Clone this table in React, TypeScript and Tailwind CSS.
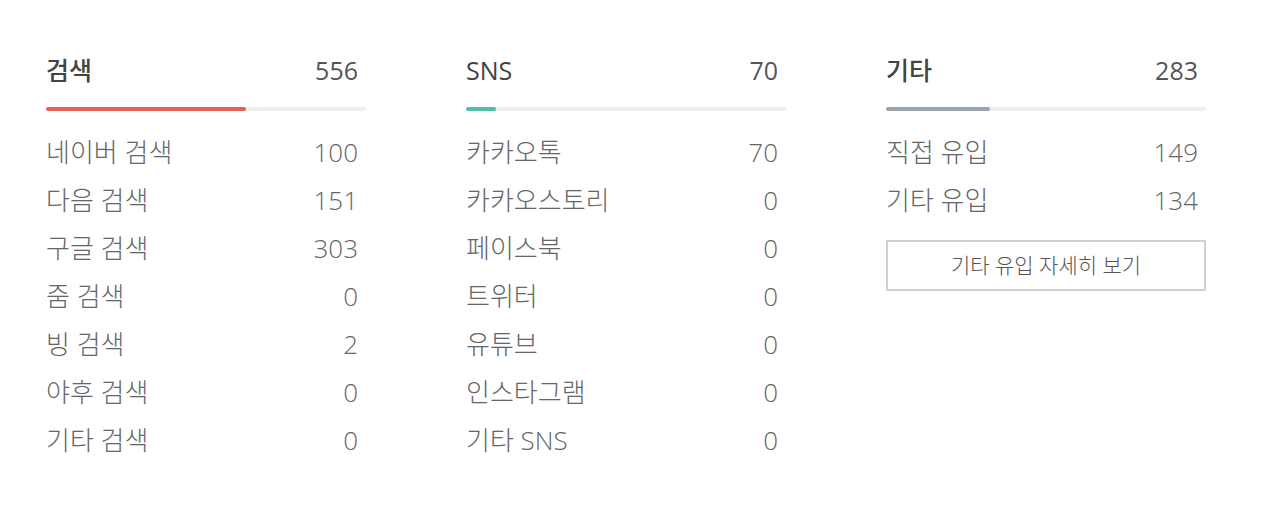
import React from 'react';

type Row = { label: string; value: number };

interface GroupProps {
  title: string;
  total: number;
  barColor: string;
  barWidth: string;
  rows: Row[];
  more?: string;
}

const groups: GroupProps[] = [
  {
    title: '검색',
    total: 556,
    barColor: 'bg-[#e8604f]',
    barWidth: 'w-[200px]',
    rows: [
      { label: '네이버 검색', value: 100 },
      { label: '다음 검색', value: 151 },
      { label: '구글 검색', value: 303 },
      { label: '줌 검색', value: 0 },
      { label: '빙 검색', value: 2 },
      { label: '야후 검색', value: 0 },
      { label: '기타 검색', value: 0 },
    ],
  },
  {
    title: 'SNS',
    total: 70,
    barColor: 'bg-[#4fc0a6]',
    barWidth: 'w-[30px]',
    rows: [
      { label: '카카오톡', value: 70 },
      { label: '카카오스토리', value: 0 },
      { label: '페이스북', value: 0 },
      { label: '트위터', value: 0 },
      { label: '유튜브', value: 0 },
      { label: '인스타그램', value: 0 },
      { label: '기타 SNS', value: 0 },
    ],
  },
  {
    title: '기타',
    total: 283,
    barColor: 'bg-[#9ba3ad]',
    barWidth: 'w-[104px]',
    rows: [
      { label: '직접 유입', value: 149 },
      { label: '기타 유입', value: 134 },
    ],
    more: '기타 유입 자세히 보기',
  },
];

function Group({ title, total, barColor, barWidth, rows, more }: GroupProps) {
  return (
    <div className="w-[320px]">
      {/* Header */}
      <div className="flex items-center justify-between pr-[8px] h-[36px] text-[25px] font-medium text-[#444]">
        <span>{title}</span>
        <span className="font-normal text-[#555]">{total}</span>
      </div>

      {/* Bar */}
      <div className="mt-[18px] h-[4px] rounded-full bg-[#eeeeee]">
        <div className={`h-full rounded-full ${barColor} ${barWidth}`} />
      </div>

      {/* Rows */}
      <div className="mt-[17px]">
        {rows.map((r) => (
          <div
            key={r.label}
            className="flex items-center justify-between h-[48px] pr-[8px] text-[26px] font-light text-[#666]"
          >
            <span>{r.label}</span>
            <span>{r.value}</span>
          </div>
        ))}
      </div>

      {more && (
        <button className="mt-[16px] w-full h-[51px] border-2 border-[#cdd1d8] bg-white text-[21px] font-light text-[#555]">
          {more}
        </button>
      )}
    </div>
  );
}

export default function App() {
  return (
    <div
      className="w-[1278px] h-[522px] bg-white pt-[53px] pl-[46px] flex gap-[100px]"
      style={{ fontFamily: '"Open Sans", "Noto Sans CJK KR", sans-serif' }}
    >
      {groups.map((g) => (
        <Group key={g.title} {...g} />
      ))}
    </div>
  );
}
